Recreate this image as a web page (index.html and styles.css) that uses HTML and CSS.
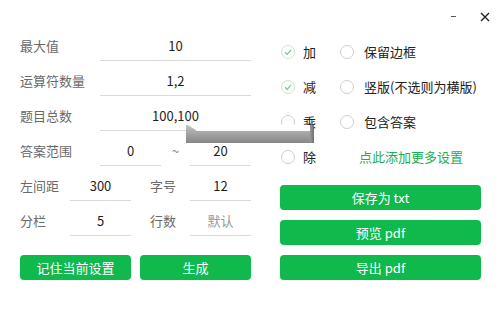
FILE: index.html
```html
<!DOCTYPE html>
<html lang="zh-CN">
<head>
    <meta charset="UTF-8">
    <title>口算题生成器</title>
    <link rel="stylesheet" href="styles.css">
</head>
<body>
    <div class="window">
        <div class="titlebar">
            <span class="min-btn"></span>
            <svg class="close-btn" width="10" height="10" viewBox="0 0 10 10">
                <path d="M1 1 L9 9 M9 1 L1 9" stroke="#222" stroke-width="1.4" fill="none"/>
            </svg>
        </div>

        <div class="main">
            <div class="left">
                <div class="row">
                    <label class="label wide">最大值</label>
                    <input class="field grow" value="10">
                </div>
                <div class="row">
                    <label class="label wide">运算符数量</label>
                    <input class="field grow" value="1,2">
                </div>
                <div class="row">
                    <label class="label wide">题目总数</label>
                    <input class="field grow" value="100,100">
                </div>
                <div class="row">
                    <label class="label wide">答案范围</label>
                    <input class="field small" value="0">
                    <span class="tilde">~</span>
                    <input class="field small" value="20">
                </div>
                <div class="row">
                    <label class="label narrow">左间距</label>
                    <input class="field small" value="300">
                    <label class="label mid">字号</label>
                    <input class="field small" value="12">
                </div>
                <div class="row">
                    <label class="label narrow">分栏</label>
                    <input class="field small" value="5">
                    <label class="label mid">行数</label>
                    <input class="field small" placeholder="默认">
                </div>
                <div class="btn-row">
                    <button class="btn">记住当前设置</button>
                    <button class="btn">生成</button>
                </div>
            </div>

            <div class="right">
                <div class="options">
                    <div class="opt check"><span class="circle on"></span>加</div>
                    <div class="opt radio"><span class="circle"></span>保留边框</div>
                    <div class="opt check"><span class="circle on"></span>减</div>
                    <div class="opt radio"><span class="circle"></span>竖版(不选则为横版)</div>
                    <div class="opt check"><span class="circle"></span>乘</div>
                    <div class="opt radio"><span class="circle"></span>包含答案</div>
                    <div class="opt check"><span class="circle"></span>除</div>
                    <div class="opt"><a class="more-link">点此添加更多设置</a></div>
                </div>
                <div class="btn-col">
                    <button class="btn">保存为 txt</button>
                    <button class="btn">预览 pdf</button>
                    <button class="btn">导出 pdf</button>
                </div>
            </div>
        </div>

        <div class="glitch"></div>
    </div>
</body>
</html>
```

FILE: styles.css
```css
body {
    margin: 0;
    background: #fff;
    font-family: "Noto Sans CJK SC", "Microsoft YaHei", sans-serif;
    font-size: 13px;
}
.window {
    position: relative;
    width: 500px;
    height: 310px;
    background: #fff;
    overflow: hidden;
}
.titlebar {
    height: 26px;
    display: flex;
    justify-content: flex-end;
    align-items: flex-start;
    padding-right: 10px;
    box-sizing: border-box;
}
.min-btn {
    width: 5px;
    height: 1px;
    background: #555;
    margin-top: 16px;
    margin-right: 24px;
}
.close-btn {
    margin-top: 12px;
}
.main {
    display: flex;
    padding-left: 20px;
}
.left {
    width: 231px;
    margin-right: 29px;
}
.row {
    display: flex;
    align-items: flex-end;
    height: 35px;
}
.label {
    color: #6a6a6a;
    height: 30px;
    line-height: 29px;
    white-space: nowrap;
}
.label.wide { width: 80px; }
.label.narrow { width: 50px; }
.label.mid { width: 40px; padding-left: 19px; }
.field {
    height: 30px;
    box-sizing: border-box;
    border: none;
    border-bottom: 1px solid #dadada;
    outline: none;
    padding: 0;
    text-align: center;
    font-family: inherit;
    font-size: 13px;
    color: #1e1e1e;
    background: transparent;
}
.field::placeholder { color: #9a9a9a; }
.field.grow { flex: 1; min-width: 0; }
.field.small { width: 61px; }
.tilde {
    width: 29px;
    height: 30px;
    line-height: 29px;
    text-align: center;
    color: #888;
}
.btn-row {
    display: flex;
    gap: 9px;
    margin-top: 19px;
}
.btn-row .btn { width: 111px; }
.btn {
    height: 25px;
    border: none;
    border-radius: 4px;
    background: #10b94c;
    color: #fff;
    font-family: inherit;
    font-size: 13px;
    padding: 0;
    cursor: pointer;
}
.right {
    width: 201px;
    padding-top: 8px;
}
.options {
    display: grid;
    grid-template-columns: 60px 1fr;
    grid-auto-rows: 35px;
}
.opt {
    display: flex;
    align-items: center;
    color: #222;
    white-space: nowrap;
}
.opt.check { padding-left: 1px; gap: 8px; }
.opt.radio { gap: 10px; }
.circle {
    width: 14px;
    height: 14px;
    box-sizing: border-box;
    border: 1px solid #cfcfcf;
    border-radius: 50%;
    flex-shrink: 0;
}
.circle.on {
    border-color: #c6e6d0;
    background: url("data:image/svg+xml;utf8,<svg xmlns='http://www.w3.org/2000/svg' width='12' height='12' viewBox='0 0 12 12'><path d='M3 6.2 L5.2 8.3 L9 3.8' stroke='%2372cb90' stroke-width='1.2' fill='none'/></svg>") center no-repeat;
}
.more-link {
    color: #18b052;
    margin-left: 19px;
    cursor: pointer;
}
.btn-col {
    display: flex;
    flex-direction: column;
    gap: 10px;
    margin-top: 11px;
}
.btn-col .btn { width: 201px; }

/* redraw artifact over the middle of the form */
.glitch {
    position: absolute;
    left: 186px;
    top: 125px;
    width: 128px;
    height: 18px;
    background: linear-gradient(to bottom, #c4c4c4 0%, #a6a6a6 45%, #868686 100%);
}
.glitch::before {
    content: "";
    position: absolute;
    inset: 0;
    background: #fff;
    clip-path: polygon(2px 0, 124px 0, 124px 6px, 11px 6px);
}
.glitch::after {
    content: "";
    position: absolute;
    right: 0;
    top: 0;
    width: 4px;
    height: 100%;
    background: linear-gradient(to right, #9a9a9a, #6e6e6e);
}
```
